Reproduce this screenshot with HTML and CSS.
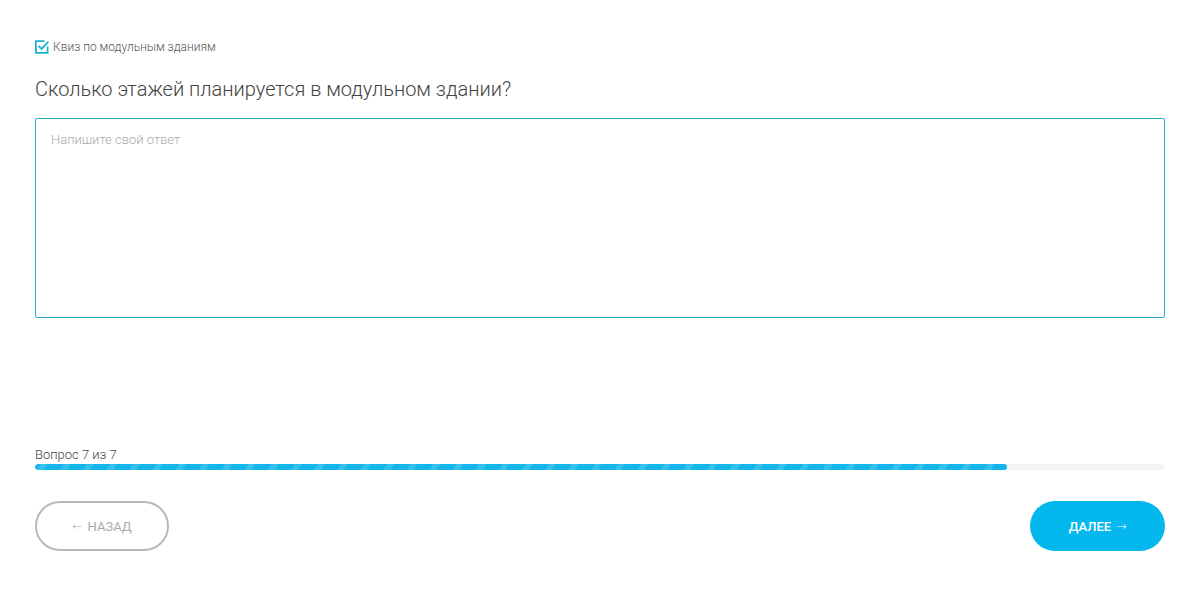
FILE: index.html
```html
<!DOCTYPE html>
<html lang="ru">
<head>
<meta charset="utf-8">
<link rel="stylesheet" href="styles.css">
</head>
<body>
<div class="quiz">
  <div class="quiz-title">
    <svg class="check" width="14" height="14" viewBox="0 0 14 14"><path d="M12.6 6.5 V12.9 H0.9 V1.1 H9.5" fill="none" stroke="#1fb3d3" stroke-width="1.8"/><path d="M3.6 5.8 L6.6 8.9 L13.4 1.8" fill="none" stroke="#1fb3d3" stroke-width="1.9"/></svg>
    <span>Квиз по модульным зданиям</span>
  </div>
  <h1 class="question">Сколько этажей планируется в модульном здании?</h1>
  <textarea class="answer" placeholder="Напишите свой ответ"></textarea>
  <div class="spacer"></div>
  <div class="progress-label">Вопрос 7 из 7</div>
  <div class="progress"><div class="progress-fill" style="width:86%"></div></div>
  <div class="nav">
    <button class="btn btn-back"><span class="arrow">←</span> НАЗАД</button>
    <button class="btn btn-next">ДАЛЕЕ <span class="arrow">→</span></button>
  </div>
</div>
</body>
</html>
```
FILE: styles.css
```css
html, body { margin: 0; padding: 0; background: #fff; }
body { font-family: Roboto, "Noto Sans", sans-serif; color: #444; }
.quiz { padding: 40px 27px 0 35px; display: flex; flex-direction: column; }
.quiz-title { display: flex; align-items: center; gap: 4px; font-size: 12px; color: #555; height: 14px; font-weight: 300; }
.check { flex: none; }
.question { margin: 22px 0 0; font-size: 20px; font-weight: 300; color: #444; line-height: 26px; }
.answer { margin-top: 16px; height: 200px; box-sizing: border-box; border: 1px solid #2ab0c8; border-radius: 2px; padding: 13px 15px; font-family: Roboto, sans-serif; font-size: 13px; resize: none; outline: none; }
.answer::placeholder { color: #aaa; font-weight: 300; }
.spacer { height: 129px; }
.progress-label { font-size: 13px; color: #444; font-weight: 300; line-height: 16px; }
.progress { margin-top: 1px; height: 6px; background: #f3f4f6; border-radius: 3px; overflow: hidden; }
.progress-fill { height: 100%; border-radius: 3px; background-color: #13b6ea; background-image: repeating-linear-gradient(-60deg, rgba(255,255,255,0) 0 14px, rgba(255,255,255,0.15) 14px 20px); }
.nav { display: flex; justify-content: space-between; margin-top: 31px; }
.btn { height: 50px; border-radius: 25px; font-family: Roboto, sans-serif; font-size: 13px; cursor: pointer; display: flex; align-items: center; justify-content: center; gap: 5px; padding: 0; }
.arrow { font-family: "DejaVu Sans", sans-serif; font-size: 12px; font-weight: 300; }
.btn-back { width: 134px; background: #fff; border: 2px solid #b8b8be; color: #aaa; font-weight: 400; }
.btn-next { width: 135px; background: #04b8ee; border: none; color: #fff; font-weight: 500; }
```
